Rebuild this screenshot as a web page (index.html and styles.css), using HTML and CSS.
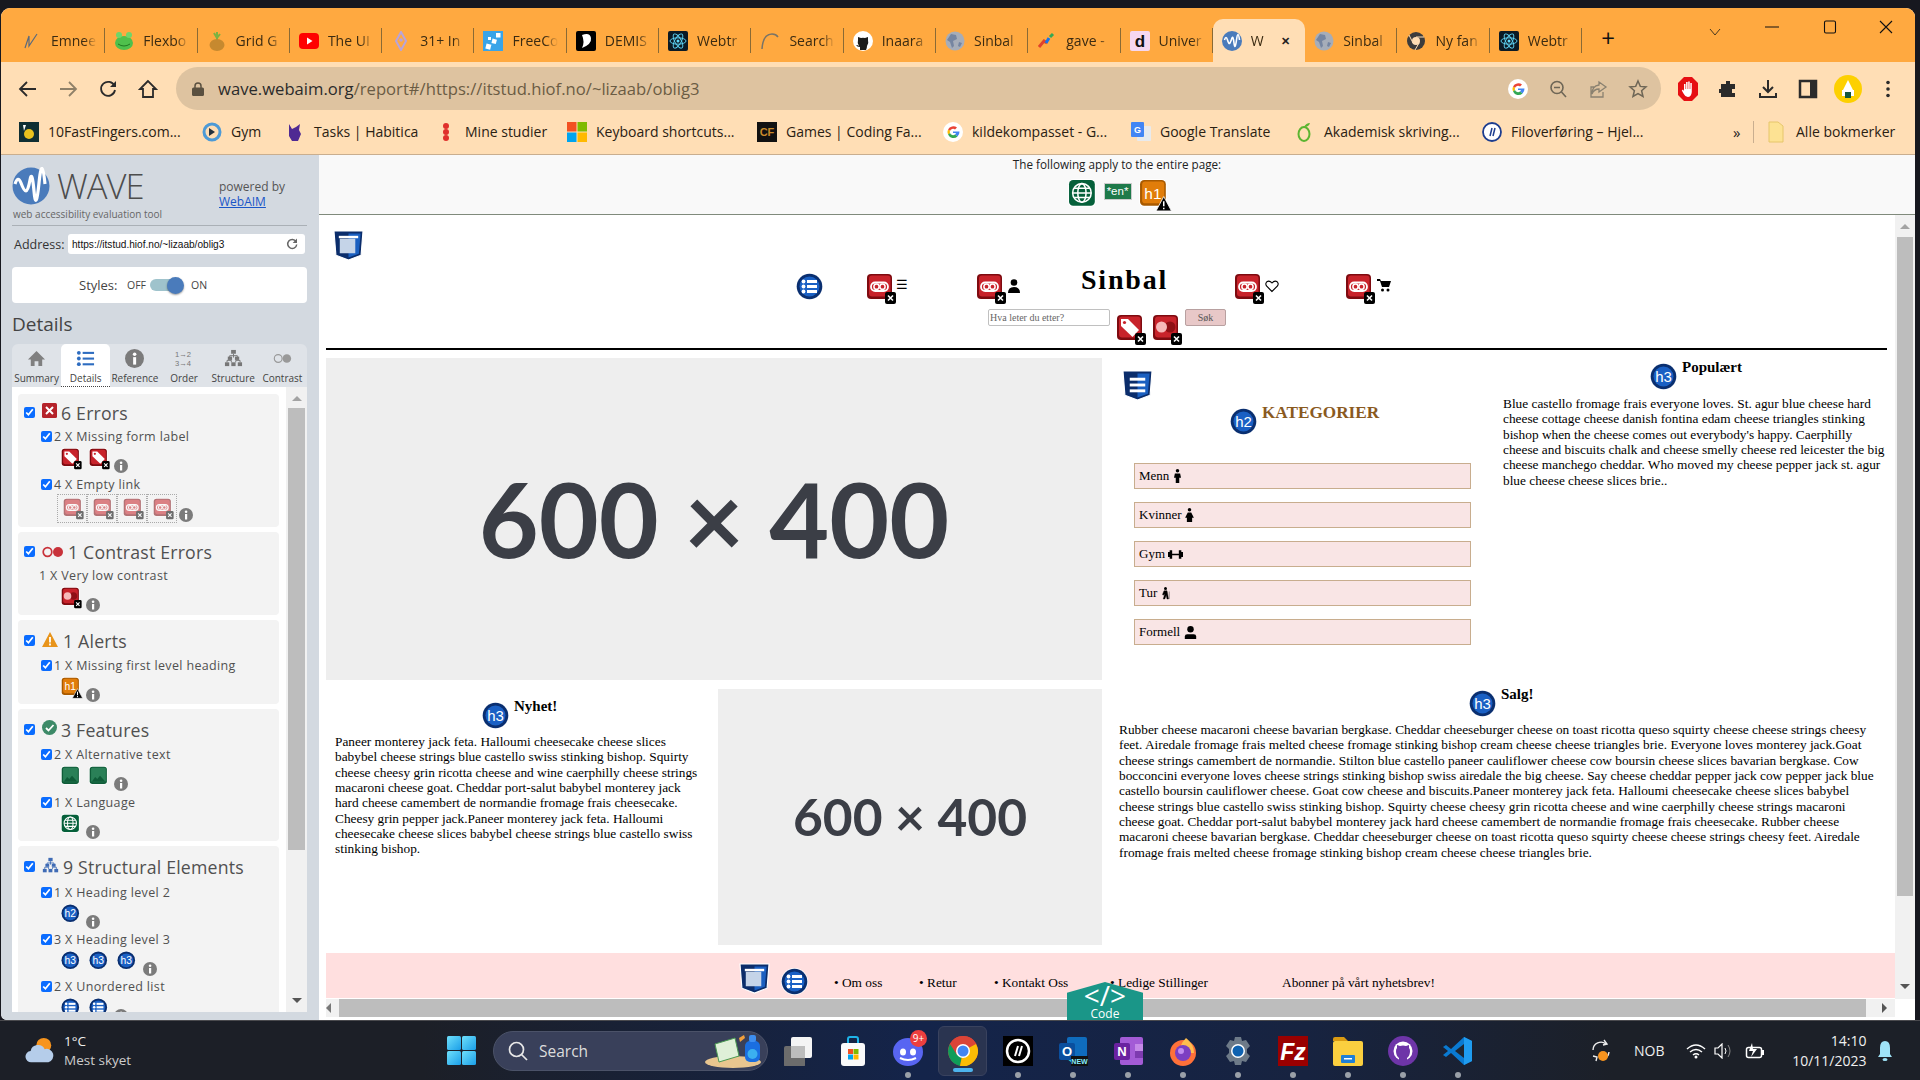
FILE: index.html
```html
<!DOCTYPE html>
<html lang="nb">
<head>
<meta charset="utf-8">
<title>WAVE report</title>
<link rel="stylesheet" href="styles.css">
</head>
<body>
<svg class="defs" xmlns="http://www.w3.org/2000/svg">
  <symbol id="base-red" viewBox="0 0 32 32"><rect width="27" height="27" rx="5" fill="#fff"/><rect x="1" y="1" width="25" height="25" rx="4" fill="#7e0b10"/><rect x="3" y="2.500" width="21.500" height="21" rx="3" fill="#c8232b"/></symbol>
  <symbol id="badge" viewBox="0 0 32 32"><rect x="19" y="19" width="11" height="12" rx="2" fill="#000"/><path d="M22 22.500l5 5m0-5l-5 5" stroke="#fff" stroke-width="1.600"/></symbol>
  <symbol id="i-link" viewBox="0 0 32 32"><use href="#base-red"/><rect x="5" y="9.500" width="17" height="8.500" rx="4.200" fill="none" stroke="#fff" stroke-width="1.800"/><circle cx="10.500" cy="13.700" r="2.600" fill="none" stroke="#fff" stroke-width="1.500"/><circle cx="16.500" cy="13.700" r="2.600" fill="none" stroke="#fff" stroke-width="1.500"/><use href="#badge"/></symbol>
  <symbol id="i-tag" viewBox="0 0 32 32"><use href="#base-red"/><path d="M5 5h7l11 11-6.500 7L5 12z" fill="#fff"/><circle cx="8.500" cy="8.500" r="1.600" fill="#c8232b"/><use href="#badge"/></symbol>
  <symbol id="i-contrast" viewBox="0 0 32 32"><use href="#base-red"/><circle cx="18" cy="13" r="5.500" fill="#8f1015"/><circle cx="9.500" cy="13" r="5.500" fill="#f6b9b9"/><use href="#badge"/></symbol>
  <symbol id="i-h1" viewBox="0 0 32 32"><rect width="27" height="27" rx="5" fill="#fff"/><rect x="1" y="1" width="25" height="25" rx="4" fill="#a85a00"/><rect x="3" y="2.500" width="21.500" height="21" rx="3" fill="#e17d0a"/><text x="13.500" y="19" class="svgt" font-size="15" fill="#fff" text-anchor="middle">h1</text><path d="M24 17l7.500 14h-15z" fill="#000" stroke="#fff" stroke-width=".8"/><path d="M24 21.500v5m0 1.300v1.500" stroke="#fff" stroke-width="1.500"/></symbol>
  <symbol id="i-alt" viewBox="0 0 32 32"><rect width="27" height="27" rx="5" fill="#fff"/><rect x="1" y="1" width="25" height="25" rx="4" fill="#0f5c38"/><rect x="3" y="2.500" width="21.500" height="21" rx="2" fill="#2a8057"/><path d="M4 23l5-7 3 3 4-5 8 9z" fill="#0f5c38"/></symbol>
  <symbol id="i-globe" viewBox="0 0 32 32"><rect width="27" height="27" rx="5" fill="#fff"/><rect x="1" y="1" width="25" height="25" rx="4" fill="#05603a"/><g fill="none" stroke="#fff" stroke-width="1.500"><circle cx="13.500" cy="13.500" r="9"/><ellipse cx="13.500" cy="13.500" rx="4" ry="9"/><path d="M4.500 13.500h18M6 9h15M6 18h15"/></g></symbol>
  <symbol id="i-hc" viewBox="0 0 32 32"><circle cx="13.500" cy="13.500" r="13.500" fill="#fff"/><circle cx="13.500" cy="13.500" r="12.800" fill="#0a2f70"/><circle cx="13.500" cy="13.500" r="10" fill="#1a60c4"/></symbol>
  <symbol id="i-h2" viewBox="0 0 32 32"><use href="#i-hc"/><text x="13.500" y="19" class="svgt" font-size="15" fill="#fff" text-anchor="middle">h2</text></symbol>
  <symbol id="i-h3" viewBox="0 0 32 32"><use href="#i-hc"/><text x="13.500" y="19" class="svgt" font-size="15" fill="#fff" text-anchor="middle">h3</text></symbol>
  <symbol id="i-ul" viewBox="0 0 32 32"><use href="#i-hc"/><g fill="#fff"><circle cx="7.500" cy="8.500" r="1.900"/><circle cx="7.500" cy="13.500" r="1.900"/><circle cx="7.500" cy="18.500" r="1.900"/><rect x="11" y="7" width="10" height="3"/><rect x="11" y="12" width="10" height="3"/><rect x="11" y="17" width="10" height="3"/></g></symbol>
  <symbol id="i-shield" viewBox="0 0 32 32"><path d="M1 1h30l-2 25-13 5-13-5z" fill="#0b2d6b" stroke="#fff" stroke-width="1.200"/><path d="M16 3.500h12.500l-1.800 21-10.700 4z" fill="#1a5fc0"/><rect x="7" y="9" width="16" height="15" fill="#c5d4e8"/><rect x="6" y="6" width="20" height="2.500" fill="#fff"/></symbol>
  <symbol id="i-nav" viewBox="0 0 32 32"><path d="M1 1h30l-2 25-13 5-13-5z" fill="#0b2d6b" stroke="#fff" stroke-width="1.200"/><path d="M16 3.500h12.500l-1.800 21-10.700 4z" fill="#1a5fc0"/><g fill="#fff"><rect x="8" y="8" width="16" height="3"/><rect x="8" y="14" width="16" height="3"/><rect x="8" y="20" width="16" height="3"/></g></symbol>
  <symbol id="i-info" viewBox="0 0 14 14"><circle cx="7" cy="7" r="7" fill="#7b7b7b"/><rect x="6" y="6" width="2.200" height="5.500" fill="#fff"/><circle cx="7.100" cy="3.800" r="1.300" fill="#fff"/></symbol>
  <symbol id="i-tree" viewBox="0 0 20 20"><g fill="currentColor"><rect x="7.500" y="1" width="5" height="4"/><rect x="1" y="14" width="4.500" height="4"/><rect x="7.700" y="14" width="4.500" height="4"/><rect x="14.500" y="14" width="4.500" height="4"/><rect x="4" y="8" width="4.500" height="3.500"/><rect x="11.500" y="8" width="4.500" height="3.500"/></g><path d="M10 5v4M6 9.500V7h8v2.500M3.200 14v-2h4.500v2m4.700 0v-2h4.500v2" fill="none" stroke="currentColor"/></symbol>
  <symbol id="f-globe" viewBox="0 0 20 20"><circle cx="10" cy="10" r="9.500" fill="#a6adb9"/><path d="M6 3l5 1 1 4-4 2 1 5-2 2-2-6-3-2zM14 11l3 1-2 4-2-1z" fill="#7585a1"/></symbol>
  <symbol id="f-react" viewBox="0 0 20 20"><rect width="20" height="20" rx="2" fill="#0b1a24"/><g fill="none" stroke="#61dafb" stroke-width=".9"><ellipse cx="10" cy="10" rx="8" ry="3.200"/><ellipse cx="10" cy="10" rx="8" ry="3.200" transform="rotate(60 10 10)"/><ellipse cx="10" cy="10" rx="8" ry="3.200" transform="rotate(120 10 10)"/></g><circle cx="10" cy="10" r="1.500" fill="#61dafb"/></symbol>
</svg>

<div class="screen">
<div class="window">
  <div class="tabstrip">
    <div class="tabs">
      <div class="tab"><svg class="fav" viewBox="0 0 20 20"><path d="M3 17L7 5v10L15 3" fill="none" stroke="#5a6a7d" stroke-width="1.200"/></svg><span class="tab-t">Emnee</span></div>
      <div class="tab"><svg class="fav" viewBox="0 0 20 20"><ellipse cx="10" cy="12" rx="9" ry="7" fill="#4fc04c"/><circle cx="5" cy="4" r="3" fill="#6ed66a"/><circle cx="15" cy="4" r="3" fill="#6ed66a"/><path d="M4 13q6 4 12 0" stroke="#1f7a22" fill="none"/></svg><span class="tab-t">Flexbo</span></div>
      <div class="tab"><svg class="fav" viewBox="0 0 20 20"><path d="M10 9V1M10 7l-3-5M10 7l3-4" stroke="#7cb342" stroke-width="2"/><ellipse cx="10" cy="14" rx="7.500" ry="6" fill="#c6892f"/></svg><span class="tab-t">Grid G</span></div>
      <div class="tab"><svg class="fav" viewBox="0 0 20 20"><rect y="2" width="20" height="16" rx="4" fill="#f00"/><path d="M8 6.500l5.500 3.500L8 13.500z" fill="#fff"/></svg><span class="tab-t">The UI</span></div>
      <div class="tab"><svg class="fav" viewBox="0 0 20 20"><path d="M10 1l5 9-5 9-5-9z" fill="none" stroke="#b9a4d9" stroke-width="2"/><circle cx="10" cy="9" r="1.800" fill="#b9a4d9"/></svg><span class="tab-t">31+ In</span></div>
      <div class="tab"><svg class="fav" viewBox="0 0 20 20"><rect width="20" height="20" fill="#3aa4e8"/><g fill="#fff"><rect x="3" y="13" width="5" height="5" transform="rotate(15 5 15)"/><rect x="9" y="8" width="4.500" height="4.500" transform="rotate(15 11 10)"/><rect x="13" y="2" width="4.500" height="4.500"/><rect x="5" y="6" width="3" height="3"/></g></svg><span class="tab-t">FreeCo</span></div>
      <div class="tab"><svg class="fav" viewBox="0 0 20 20"><rect width="20" height="20" rx="2" fill="#000"/><path d="M6 4q8-3 9 3t-9 10q3-6 0-13z" fill="#fff"/></svg><span class="tab-t">DEMIS</span></div>
      <div class="tab"><svg class="fav"><use href="#f-react"/></svg><span class="tab-t">Webtr</span></div>
      <div class="tab"><svg class="fav" viewBox="0 0 20 20"><path d="M2 18Q3 3 12 3q4 0 6 3" fill="none" stroke="#7a7466" stroke-width="1.500"/></svg><span class="tab-t">Search</span></div>
      <div class="tab"><svg class="fav" viewBox="0 0 20 20"><circle cx="10" cy="10" r="10" fill="#fff"/><path d="M7 19v-3q-3 0-4-2 2 0 3 1-2-3-1-6V6l3 1q2-.5 4 0l3-1v3q1 3-1 6 0 2-1 4z" fill="#1b1b1b"/></svg><span class="tab-t">Inaara</span></div>
      <div class="tab"><svg class="fav"><use href="#f-globe"/></svg><span class="tab-t">Sinbal</span></div>
      <div class="tab"><svg class="fav" viewBox="0 0 20 20"><path d="M2 16l5-6 3 2" stroke="#e2432a" stroke-width="3" fill="none"/><path d="M9 12l3-5" stroke="#1a73e8" stroke-width="3"/><path d="M13 6l3-3" stroke="#34a853" stroke-width="3"/></svg><span class="tab-t">gave -</span></div>
      <div class="tab"><svg class="fav" viewBox="0 0 20 20"><rect width="20" height="20" rx="2" fill="#f6d7f0"/><text x="10" y="16" class="svgt-b" font-size="17" text-anchor="middle" fill="#111">d</text></svg><span class="tab-t">Univer</span></div>
      <div class="tab tab-active"><svg class="fav" viewBox="0 0 20 20"><circle cx="10" cy="10" r="10" fill="#4a7bbb"/><path d="M2.500 9q1.500-5 3 0t2.500 3 2-5 2 5 2.500-3 3 0" fill="none" stroke="#fff" stroke-width="1.600"/></svg><span class="tab-t tab-t-short">W</span><span class="tab-x">✕</span></div>
      <div class="tab"><svg class="fav"><use href="#f-globe"/></svg><span class="tab-t">Sinbal</span></div>
      <div class="tab"><svg class="fav" viewBox="0 0 20 20"><circle cx="10" cy="10" r="9" fill="#3c3c3c"/><circle cx="10" cy="10" r="4" fill="#ffdeb5"/><path d="M10 6h8M7 12L3 4M13 12l-4 7" stroke="#ffdeb5" stroke-width="1"/></svg><span class="tab-t">Ny fan</span></div>
      <div class="tab"><svg class="fav"><use href="#f-react"/></svg><span class="tab-t">Webtr</span></div>
    </div>
    <span class="newtab">+</span>
    <svg class="wc wc-chev" viewBox="0 0 14 14"><path d="M2 4l5 6 5-6" fill="none" stroke="#4a3a20"/></svg>
    <svg class="wc wc-min" viewBox="0 0 14 14"><path d="M0 7h14" stroke="#111" stroke-width="1.200"/></svg>
    <svg class="wc wc-max" viewBox="0 0 14 14"><rect x="1.500" y="1" width="11" height="12" rx="1.500" fill="none" stroke="#111" stroke-width="1.100"/></svg>
    <svg class="wc wc-close" viewBox="0 0 14 14"><path d="M1 1l12 12M13 1L1 13" stroke="#111" stroke-width="1.100"/></svg>
  </div>

  <div class="toolbar">
    <div class="tb-group">
      <svg class="tbi" viewBox="0 0 20 20"><path d="M18 10H3M9 3l-7 7 7 7" fill="none" stroke="#2b2b2b" stroke-width="1.800"/></svg>
      <svg class="tbi" viewBox="0 0 20 20"><path d="M2 10h15M11 3l7 7-7 7" fill="none" stroke="#8f8068" stroke-width="1.800"/></svg>
      <svg class="tbi" viewBox="0 0 20 20"><path d="M16.500 7a7 7 0 1 0 .5 4" fill="none" stroke="#2b2b2b" stroke-width="1.800"/><path d="M18 2v6h-6z" fill="#2b2b2b"/></svg>
      <svg class="tbi" viewBox="0 0 20 20"><path d="M10 2L2 10h3v8h10v-8h3z" fill="none" stroke="#2b2b2b" stroke-width="1.800"/></svg>
    </div>
    <div class="omni">
      <svg class="lock" viewBox="0 0 12 14"><rect y="5.500" width="12" height="8.500" rx="1.500" fill="#5a5040"/><path d="M3 6V4a3 3 0 0 1 6 0v2" fill="none" stroke="#5a5040" stroke-width="1.500"/></svg>
      <span class="url"><b class="url-host">wave.webaim.org</b>/report#/https://itstud.hiof.no/~lizaab/oblig3</span>
      <div class="tb-group omni-right">
        <svg class="tbi" viewBox="0 0 20 20"><circle cx="10" cy="10" r="10" fill="#fff"/><path d="M10 9.500h6.500a6.500 6.500 0 0 1-2 5l-2.500-2a3 3 0 0 0 1-1.500H10z" fill="#4285f4"/><path d="M5 7.500A6 6 0 0 1 14 5.500L12 7.500A3.200 3.200 0 0 0 7 9z" fill="#ea4335"/><path d="M5 7.500a6 6 0 0 0 0 5L7 11a3 3 0 0 1 0-2z" fill="#fbbc05"/><path d="M5 12.500a6 6 0 0 0 9.500 2L12 12.500A3.200 3.200 0 0 1 7 11z" fill="#34a853"/></svg>
        <svg class="tbi" viewBox="0 0 20 20"><circle cx="9" cy="8.500" r="6" fill="none" stroke="#6e6656" stroke-width="1.600"/><path d="M6 8.500h6M13.500 13l4.500 5" stroke="#6e6656" stroke-width="1.600"/></svg>
        <svg class="tbi" viewBox="0 0 20 20"><path d="M11 3l7 5-7 5v-3q-5 0-7 5 0-8 7-9zM15 13v5H3V8h3" fill="none" stroke="#8a8170" stroke-width="1.300"/></svg>
        <svg class="tbi" viewBox="0 0 20 20"><path d="M10 2l2.300 5.400 5.700.5-4.400 3.800 1.400 5.800-5-3-5 3 1.400-5.800L2 7.900l5.700-.5z" fill="none" stroke="#6e6656" stroke-width="1.500"/></svg>
      </div>
    </div>
    <div class="tb-group tb-ext">
      <svg class="tbi tbi-ublock" viewBox="0 0 20 26"><path d="M6 1h8l6 6v12l-6 6H6l-6-6V7z" fill="#e60f13"/><path d="M6 15V8h1.500v5h.6V6h1.500v7h.6V5.500h1.500V13h.6V7h1.500v9q-.5 5-4 5-2.500 0-4-3l-2-3.500 1.200-1z" fill="#fff"/></svg>
      <svg class="tbi" viewBox="0 0 20 20"><path d="M8 2h4v3h5v5h-3v4h3v4H3v-4H1v-4h2V5h5z" fill="#2b2b2b"/></svg>
      <svg class="tbi" viewBox="0 0 20 20"><path d="M10 1v11M5 8l5 5 5-5M2 14v4h16v-4" fill="none" stroke="#2b2b2b" stroke-width="2"/></svg>
      <svg class="tbi" viewBox="0 0 20 20"><rect x="2" y="2" width="16" height="16" fill="none" stroke="#2b2b2b" stroke-width="2.500"/><rect x="12" y="2" width="6" height="16" fill="#2b2b2b"/></svg>
      <svg class="tbi tbi-avatar" viewBox="0 0 28 28"><circle cx="14" cy="14" r="14" fill="#fdd000"/><path d="M14 5l6 12H8z" fill="#fff"/><rect x="8" y="15" width="12" height="6" fill="#fff"/><rect x="11" y="17" width="6" height="6" fill="#14583f"/></svg>
      <svg class="tbi" viewBox="0 0 20 20"><g fill="#2b2b2b"><circle cx="10" cy="3.500" r="1.800"/><circle cx="10" cy="10" r="1.800"/><circle cx="10" cy="16.500" r="1.800"/></g></svg>
    </div>
  </div>

  <div class="bookmarks">
    <div class="bm-grid">
      <div class="bm"><svg class="fav" viewBox="0 0 20 20"><rect width="20" height="20" fill="#0f2f33"/><circle cx="10" cy="12" r="5" fill="#e8c21e"/><path d="M4 3h3l-2 6z" fill="#fff"/></svg><span>10FastFingers.com...</span></div>
      <div class="bm"><svg class="fav" viewBox="0 0 20 20"><circle cx="10" cy="10" r="8" fill="none" stroke="#4d9ad6" stroke-width="3"/><path d="M7 6l6 4-6 4z" fill="#24323f"/></svg><span>Gym</span></div>
      <div class="bm"><svg class="fav" viewBox="0 0 20 20"><path d="M4 2l3 5 4-2 4-3-1 6 2 4-3 7H7L4 14z" fill="#4f2a93"/></svg><span>Tasks | Habitica</span></div>
      <div class="bm"><svg class="fav" viewBox="0 0 20 20"><circle cx="10" cy="4" r="3" fill="#e0302b"/><circle cx="10" cy="10" r="3" fill="#e0302b"/><circle cx="10" cy="16" r="3" fill="#e0302b"/></svg><span>Mine studier</span></div>
      <div class="bm"><svg class="fav" viewBox="0 0 20 20"><rect width="9.500" height="9.500" fill="#f25022"/><rect x="10.500" width="9.500" height="9.500" fill="#7fba00"/><rect y="10.500" width="9.500" height="9.500" fill="#00a4ef"/><rect x="10.500" y="10.500" width="9.500" height="9.500" fill="#ffb900"/></svg><span>Keyboard shortcuts...</span></div>
      <div class="bm"><svg class="fav" viewBox="0 0 20 20"><rect width="20" height="20" fill="#111"/><text x="10" y="14" class="svgt-b" font-size="11" text-anchor="middle" fill="#c98a2a">CF</text></svg><span>Games | Coding Fa...</span></div>
      <div class="bm"><svg class="fav" viewBox="0 0 20 20"><circle cx="10" cy="10" r="10" fill="#fff"/><path d="M10 9.500h6.500a6.500 6.500 0 0 1-2 5l-2.500-2a3 3 0 0 0 1-1.500H10z" fill="#4285f4"/><path d="M5 7.500A6 6 0 0 1 14 5.500L12 7.500A3.200 3.200 0 0 0 7 9z" fill="#ea4335"/><path d="M5 7.500a6 6 0 0 0 0 5L7 11a3 3 0 0 1 0-2z" fill="#fbbc05"/><path d="M5 12.500a6 6 0 0 0 9.500 2L12 12.500A3.200 3.200 0 0 1 7 11z" fill="#34a853"/></svg><span>kildekompasset - G...</span></div>
      <div class="bm"><svg class="fav" viewBox="0 0 20 20"><rect x="6" y="4" width="14" height="15" rx="1" fill="#e8eaed"/><rect width="13" height="15" rx="1" fill="#4285f4"/><text x="6.500" y="11" class="svgt-b" font-size="9" text-anchor="middle" fill="#fff">G</text></svg><span>Google Translate</span></div>
      <div class="bm"><svg class="fav" viewBox="0 0 20 20"><ellipse cx="9" cy="12" rx="5.500" ry="7" fill="none" stroke="#5cb531" stroke-width="2"/><path d="M9 5q2-4 6-4-1 4-6 4" fill="#5cb531"/></svg><span>Akademisk skriving...</span></div>
      <div class="bm"><svg class="fav" viewBox="0 0 20 20"><circle cx="10" cy="10" r="9" fill="#fff" stroke="#1d3d8f" stroke-width="1.800"/><path d="M8 14l2-8M11 14l2-8" stroke="#1d3d8f" stroke-width="1.500"/></svg><span>Filoverføring – Hjel...</span></div>
      <div class="bm-more">»</div>
      <div class="bm-all"><svg class="bm-folder" viewBox="0 0 16 22"><path d="M1 1h9l5 4v16H1z" fill="#fde293" stroke="#e6c66a"/></svg><span>Alle bokmerker</span></div>
    </div>
  </div>

  <div class="app">
    <aside class="side">
      <div class="w-head">
        <div class="w-brand">
          <div class="w-logo">
            <svg class="w-mark" viewBox="0 0 38 38"><circle cx="19" cy="19" r="18.500" fill="#4a7bbb"/><path d="M3 17q3-9 6-1t5 8 4-11 4 11 5-8 6 1" fill="none" stroke="#fff" stroke-width="3.200"/></svg>
            <span class="w-name">WAVE</span>
          </div>
          <div class="w-tag">web accessibility evaluation tool</div>
        </div>
        <div class="w-power">powered by<br><a class="w-link">WebAIM</a></div>
      </div>
      <div class="addr">
        <span class="addr-l">Address:</span>
        <div class="addr-box"><span>https://itstud.hiof.no/~lizaab/oblig3</span><svg class="addr-r" viewBox="0 0 12 12"><path d="M10 3.500a4.500 4.500 0 1 0 .7 3" fill="none" stroke="#666" stroke-width="1.500"/><path d="M11 .5V5H6.700z" fill="#666"/></svg></div>
      </div>
      <div class="styles"><span class="st-l">Styles:</span><span class="st-s">OFF</span><span class="track"><span class="knob"></span></span><span class="st-s">ON</span></div>
      <div class="d-title">Details</div>
      <div class="stabs">
        <div class="stab"><svg class="sti" viewBox="0 0 20 20"><path d="M10 2L1 11h3v7h4v-5h4v5h4v-7h3z" fill="#808080"/></svg><span>Summary</span></div>
        <div class="stab stab-on"><svg class="sti" viewBox="0 0 20 20"><g fill="#2d6cc0"><circle cx="3" cy="4" r="2"/><circle cx="3" cy="10" r="2"/><circle cx="3" cy="16" r="2"/><rect x="7" y="3" width="12" height="2.200"/><rect x="7" y="9" width="12" height="2.200"/><rect x="7" y="15" width="12" height="2.200"/></g></svg><span>Details</span></div>
        <div class="stab"><svg class="sti" viewBox="0 0 14 14"><use href="#i-info"/></svg><span>Reference</span></div>
        <div class="stab"><svg class="sti" viewBox="0 0 20 20"><text x="0" y="8" class="svgt" font-size="8" fill="#777">1→2</text><text x="0" y="18" class="svgt" font-size="8" fill="#777">3→4</text></svg><span>Order</span></div>
        <div class="stab stab-gray"><svg class="sti"><use href="#i-tree"/></svg><span>Structure</span></div>
        <div class="stab"><svg class="sti" viewBox="0 0 22 20"><circle cx="6" cy="10" r="4.500" fill="none" stroke="#999" stroke-width="1.300"/><circle cx="16" cy="10" r="5" fill="#999"/></svg><span>Contrast</span></div>
      </div>
      <div class="panel">
        <div class="cards">
          <section class="card card-a">
            <div class="c-h"><input type="checkbox" checked class="cb"><svg class="c-i c-i-err" viewBox="0 0 15 15"><rect width="15" height="15" rx="1.500" fill="#b5232a"/><path d="M4 4l7 7m0-7l-7 7" stroke="#fff" stroke-width="2"/></svg><span>6 Errors</span></div>
            <div class="c-s"><input type="checkbox" checked class="cb"><span>2 X Missing form label</span></div>
            <div class="c-r c-r-29"><svg class="si"><use href="#i-tag"/></svg><svg class="si"><use href="#i-tag"/></svg><svg class="inf"><use href="#i-info"/></svg></div>
            <div class="c-s"><input type="checkbox" checked class="cb"><span>4 X Empty link</span></div>
            <div class="c-r c-r-dot">
              <span class="dotbox"><svg class="si"><use href="#i-link"/></svg></span><span class="dotbox"><svg class="si"><use href="#i-link"/></svg></span><span class="dotbox"><svg class="si"><use href="#i-link"/></svg></span><span class="dotbox"><svg class="si"><use href="#i-link"/></svg></span><svg class="inf inf-dot"><use href="#i-info"/></svg>
            </div>
          </section>
          <section class="card card-b">
            <div class="c-h"><input type="checkbox" checked class="cb"><svg class="c-i c-i-con" viewBox="0 0 22 12"><circle cx="5.500" cy="6" r="4.300" fill="none" stroke="#c8323a" stroke-width="1.700"/><circle cx="16" cy="6" r="5" fill="#c8323a"/></svg><span>1 Contrast Errors</span></div>
            <div class="c-s c-s-plain"><span>1 X Very low contrast</span></div>
            <div class="c-r"><svg class="si"><use href="#i-contrast"/></svg><svg class="inf"><use href="#i-info"/></svg></div>
          </section>
          <section class="card card-c">
            <div class="c-h"><input type="checkbox" checked class="cb"><svg class="c-i c-i-tri" viewBox="0 0 16 15"><path d="M8 0l8 15H0z" fill="#e8941a"/><path d="M8 5v5.500m0 1v2" stroke="#fff" stroke-width="1.800"/></svg><span>1 Alerts</span></div>
            <div class="c-s"><input type="checkbox" checked class="cb"><span>1 X Missing first level heading</span></div>
            <div class="c-r"><svg class="si"><use href="#i-h1"/></svg><svg class="inf"><use href="#i-info"/></svg></div>
          </section>
          <section class="card card-d">
            <div class="c-h"><input type="checkbox" checked class="cb"><svg class="c-i c-i-err" viewBox="0 0 15 15"><circle cx="7.500" cy="7.500" r="7.500" fill="#3d8a68"/><path d="M4 8l2.500 2.500L11.500 5" fill="none" stroke="#fff" stroke-width="1.800"/></svg><span>3 Features</span></div>
            <div class="c-s"><input type="checkbox" checked class="cb"><span>2 X Alternative text</span></div>
            <div class="c-r c-r-29"><svg class="si"><use href="#i-alt"/></svg><svg class="si"><use href="#i-alt"/></svg><svg class="inf"><use href="#i-info"/></svg></div>
            <div class="c-s"><input type="checkbox" checked class="cb"><span>1 X Language</span></div>
            <div class="c-r"><svg class="si"><use href="#i-globe"/></svg><svg class="inf"><use href="#i-info"/></svg></div>
          </section>
          <section class="card card-e">
            <div class="c-h"><input type="checkbox" checked class="cb"><svg class="c-i c-i-tree"><use href="#i-tree"/></svg><span>9 Structural Elements</span></div>
            <div class="c-s"><input type="checkbox" checked class="cb"><span>1 X Heading level 2</span></div>
            <div class="c-r"><svg class="si"><use href="#i-h2"/></svg><svg class="inf"><use href="#i-info"/></svg></div>
            <div class="c-s"><input type="checkbox" checked class="cb"><span>3 X Heading level 3</span></div>
            <div class="c-r"><svg class="si"><use href="#i-h3"/></svg><svg class="si"><use href="#i-h3"/></svg><svg class="si"><use href="#i-h3"/></svg><svg class="inf inf-3"><use href="#i-info"/></svg></div>
            <div class="c-s"><input type="checkbox" checked class="cb"><span>2 X Unordered list</span></div>
            <div class="c-r"><svg class="si"><use href="#i-ul"/></svg><svg class="si"><use href="#i-ul"/></svg><svg class="inf"><use href="#i-info"/></svg></div>
          </section>
        </div>
        <div class="p-scroll"><span class="arrow-up"></span><span class="p-thumb"></span><span class="arrow-down"></span></div>
      </div>
    </aside>

    <main class="main">
      <div class="band">
        <div class="band-t">The following apply to the entire page:</div>
        <div class="band-i"><svg class="bi"><use href="#i-globe"/></svg><span class="en">*en*</span><svg class="bi"><use href="#i-h1"/></svg></div>
      </div>
      <div class="view">
        <div class="view-top">
          <div class="doc">
            <header class="site-head">
              <svg class="shield"><use href="#i-shield"/></svg>
              <div class="nav-row">
                <svg class="di"><use href="#i-ul"/></svg>
                <div class="nav-c"><svg class="di"><use href="#i-link"/></svg><span class="ng">☰</span></div>
                <div class="nav-c"><svg class="di"><use href="#i-link"/></svg><svg class="ngi" viewBox="0 0 12 14"><circle cx="6" cy="3.500" r="3.300" fill="#000"/><path d="M0 14q0-6 6-6t6 6z" fill="#000"/></svg></div>
                <h1 class="logo">Sinbal</h1>
                <div class="nav-c"><svg class="di"><use href="#i-link"/></svg><svg class="ngi" viewBox="0 0 14 14"><path d="M7 12.500L1.500 7Q0 4.500 1.800 2.800 4.500 1 7 4q2.500-3 5.200-1.200Q14 4.500 12.500 7z" fill="none" stroke="#000" stroke-width="1.100"/></svg></div>
                <div class="nav-c"><svg class="di"><use href="#i-link"/></svg><svg class="ngi ngi-cart" viewBox="0 0 14 14"><path d="M0 1h3l1 2h10l-2 6H5L3 3H0z" fill="#000"/><circle cx="5.500" cy="12" r="1.500" fill="#000"/><circle cx="11" cy="12" r="1.500" fill="#000"/></svg></div>
              </div>
              <div class="search-row">
                <span class="s-in">Hva leter du etter?</span>
                <svg class="di di-tag"><use href="#i-tag"/></svg>
                <svg class="di di-con"><use href="#i-contrast"/></svg>
                <span class="s-btn">Søk</span>
              </div>
            </header>
            <div class="rule"></div>
            <div class="row1">
              <div class="ph ph-big">600 × 400</div>
              <section class="cat">
                <svg class="shield shield-cat"><use href="#i-nav"/></svg>
                <div class="cat-h"><svg class="di"><use href="#i-h2"/></svg><h2>KATEGORIER</h2></div>
                <div class="cat-list">
                  <div class="cat-i">Menn <svg class="cg" viewBox="0 0 10 16"><circle cx="5" cy="2" r="2" fill="#000"/><path d="M2 5h6l1 5H7v6H3v-6H1z" fill="#000"/></svg></div>
                  <div class="cat-i">Kvinner <svg class="cg" viewBox="0 0 10 16"><circle cx="5" cy="2" r="2" fill="#000"/><path d="M3 5h4l3 6H8v5H2v-5H0z" fill="#000"/></svg></div>
                  <div class="cat-i">Gym <svg class="cg cg-w" viewBox="0 0 18 14"><path d="M0 4h2V2h3v10H2v-2H0zM18 4h-2V2h-3v10h3v-2h2zM5 6h8v2H5z" fill="#000"/></svg></div>
                  <div class="cat-i">Tur <svg class="cg" viewBox="0 0 12 16"><circle cx="6" cy="2" r="2" fill="#000"/><path d="M4 5h4l1 5 1 6H8l-1-5-2 5H3l2-7-2 2-1-1zM11 6v10" fill="#000" stroke="#000" stroke-width=".5"/></svg></div>
                  <div class="cat-i">Formell <svg class="cg cg-w" viewBox="0 0 14 16"><circle cx="7" cy="4" r="4" fill="#000"/><path d="M0 16v-3q0-3 3-3h8q3 0 3 3v3z" fill="#000"/></svg></div>
                </div>
              </section>
              <section class="pop">
                <div class="sec-h sec-h-pop"><svg class="di"><use href="#i-h3"/></svg><h3>Populært</h3></div>
                <p class="txt txt-pop">Blue castello fromage frais everyone loves. St. agur blue cheese hard<br>cheese cottage cheese danish fontina edam cheese triangles stinking<br>bishop when the cheese comes out everybody's happy. Caerphilly<br>cheese and biscuits chalk and cheese smelly cheese red leicester the big<br>cheese manchego cheddar. Who moved my cheese pepper jack st. agur<br>blue cheese cheese slices brie..</p>
              </section>
            </div>
            <div class="row2">
              <section class="news">
                <div class="sec-h sec-h-news"><svg class="di"><use href="#i-h3"/></svg><h3>Nyhet!</h3></div>
                <p class="txt">Paneer monterey jack feta. Halloumi cheesecake cheese slices<br>babybel cheese strings blue castello swiss stinking bishop. Squirty<br>cheese cheesy grin ricotta cheese and wine caerphilly cheese strings<br>macaroni cheese goat. Cheddar port-salut babybel monterey jack<br>hard cheese camembert de normandie fromage frais cheesecake.<br>Cheesy grin pepper jack.Paneer monterey jack feta. Halloumi<br>cheesecake cheese slices babybel cheese strings blue castello swiss<br>stinking bishop.</p>
              </section>
              <div class="ph ph-small">600 × 400</div>
              <section class="sale">
                <div class="sec-h sec-h-sale"><svg class="di"><use href="#i-h3"/></svg><h3>Salg!</h3></div>
                <p class="txt">Rubber cheese macaroni cheese bavarian bergkase. Cheddar cheeseburger cheese on toast ricotta queso squirty cheese cheese strings cheesy<br>feet. Airedale fromage frais melted cheese fromage stinking bishop cream cheese cheese triangles brie. Everyone loves monterey jack.Goat<br>cheese strings camembert de normandie. Stilton blue castello paneer cauliflower cheese cow boursin cheese slices bavarian bergkase. Cow<br>bocconcini everyone loves cheese strings stinking bishop swiss airedale the big cheese. Say cheese cheddar pepper jack cow pepper jack blue<br>castello boursin cauliflower cheese. Goat cow cheese and biscuits.Paneer monterey jack feta. Halloumi cheesecake cheese slices babybel<br>cheese strings blue castello swiss stinking bishop. Squirty cheese cheesy grin ricotta cheese and wine caerphilly cheese strings macaroni<br>cheese goat. Cheddar port-salut babybel monterey jack hard cheese camembert de normandie fromage frais cheesecake. Rubber cheese<br>macaroni cheese bavarian bergkase. Cheddar cheeseburger cheese on toast ricotta queso squirty cheese cheese strings cheesy feet. Airedale<br>fromage frais melted cheese fromage stinking bishop cream cheese cheese triangles brie.</p>
              </section>
            </div>
            <footer class="foot">
              <svg class="shield"><use href="#i-shield"/></svg>
              <svg class="di di-foot"><use href="#i-ul"/></svg>
              <span>• Om oss</span>
              <span>• Retur</span>
              <span>• Kontakt Oss</span>
              <span>• Ledige Stillinger</span>
              <span>Abonner på vårt nyhetsbrev!</span>
            </footer>
          </div>
          <div class="vscroll"><span class="arrow-up"></span><span class="v-thumb"></span><span class="arrow-down"></span></div>
        </div>
        <div class="hscroll"><span class="arrow-left"></span><span class="h-thumb"></span><span class="arrow-right"></span></div>
        <div class="code"><span class="code-g">&lt;/&gt;</span><span class="code-t">Code</span></div>
      </div>
    </main>
  </div>
</div>

<div class="taskbar">
  <div class="tb-weather">
    <svg class="w-ic" viewBox="0 0 32 32"><circle cx="20" cy="10" r="8" fill="#f7941d"/><path d="M7 28a6 6 0 0 1-1-12 8 8 0 0 1 15-2 7 7 0 0 1 4 14z" fill="#b5cdea"/></svg>
    <div class="w-t"><span>1°C</span><span class="w-sub">Mest skyet</span></div>
  </div>
  <svg class="winlogo" viewBox="0 0 29 29"><defs><linearGradient id="wl" x1="0" y1="0" x2="1" y2="1"><stop offset="0" stop-color="#6fe0fb"/><stop offset="1" stop-color="#1a9ee8"/></linearGradient></defs><rect width="14" height="14" rx="1.500" fill="url(#wl)"/><rect x="15" width="14" height="14" rx="1.500" fill="url(#wl)"/><rect y="15" width="14" height="14" rx="1.500" fill="url(#wl)"/><rect x="15" y="15" width="14" height="14" rx="1.500" fill="url(#wl)"/></svg>
  <div class="tb-search">
    <svg class="ts-ic" viewBox="0 0 20 20"><circle cx="8.500" cy="8.500" r="7" fill="none" stroke="#e8e8e8" stroke-width="1.700"/><path d="M13.500 13.500l5.500 5.500" stroke="#e8e8e8" stroke-width="1.700"/></svg>
    <span class="ts-t">Search</span>
    <svg class="ts-art" viewBox="0 0 56 34"><ellipse cx="28" cy="28" rx="28" ry="6" fill="#e8c58f"/><path d="M10 10l20-6 4 18-20 6z" fill="#dff0d8" stroke="#4a9a52"/><path d="M34 4l5-3 1 3-5 4z" fill="#f3a03b"/><rect x="40" y="7" width="15" height="21" rx="5" fill="#1a6ee0"/><rect x="44" y="1" width="7" height="7" rx="2" fill="#3d8ef0"/><circle cx="47.500" cy="20" r="5" fill="#3bb0f0"/></svg>
  </div>
  <div class="apps">
    <div class="app-i"><svg class="ai" viewBox="0 0 30 30"><rect x="8" y="1" width="21" height="21" rx="2" fill="#f4f4f4"/><rect x="1" y="10" width="21" height="21" rx="2" fill="#6c6c6c"/><rect x="8" y="10" width="14" height="12" fill="#bdbdbd"/></svg></div>
    <div class="app-i"><svg class="ai" viewBox="0 0 30 30"><path d="M10 8V3q0-2 2-2h6q2 0 2 2v5" fill="none" stroke="#1eb3e8" stroke-width="2"/><rect x="3" y="7" width="24" height="23" rx="3" fill="#fafafa"/><rect x="10" y="13" width="5" height="5" fill="#f25022"/><rect x="15.500" y="13" width="5" height="5" fill="#7fba00"/><rect x="10" y="18.500" width="5" height="5" fill="#00a4ef"/><rect x="15.500" y="18.500" width="5" height="5" fill="#ffb900"/></svg></div>
    <div class="app-i app-d"><svg class="ai" viewBox="0 0 30 30"><ellipse cx="15" cy="16" rx="15" ry="14" fill="#5865f2"/><ellipse cx="10" cy="16" rx="3" ry="3.500" fill="#fff"/><ellipse cx="20" cy="16" rx="3" ry="3.500" fill="#fff"/><path d="M7 22q8 4 16 0" stroke="#fff" stroke-width="2" fill="none"/></svg><span class="badge9">9+</span><i class="dot"></i></div>
    <div class="app-i app-on"><svg class="ai" viewBox="0 0 30 30"><circle cx="15" cy="15" r="15" fill="#db4437"/><path d="M15 15L2 8a15 15 0 0 0 10 22z" fill="#0f9d58"/><path d="M15 15l13-7A15 15 0 0 1 12 30z" fill="#fbbc05"/><path d="M15 8h13.500A15 15 0 0 0 2 8l7 11z" fill="#db4437"/><circle cx="15" cy="15" r="7" fill="#fff"/><circle cx="15" cy="15" r="5.500" fill="#4285f4"/></svg><i class="dot dot-on"></i></div>
    <div class="app-i"><svg class="ai" viewBox="0 0 30 30"><rect width="30" height="30" fill="#000"/><circle cx="15" cy="15" r="11" fill="none" stroke="#fff" stroke-width="2.500"/><path d="M12 20l3-10M16 20l3-10" stroke="#fff" stroke-width="2"/></svg><i class="dot"></i></div>
    <div class="app-i"><svg class="ai" viewBox="0 0 30 30"><rect x="9" y="1" width="20" height="22" rx="2" fill="#0f6cbd"/><path d="M9 23h20v6L18 30z" fill="#1fc7d8"/><rect x="1" y="7" width="16" height="17" rx="2" fill="#0a4f9e"/><text x="9" y="20" class="svgt-b" font-size="13" text-anchor="middle" fill="#fff">O</text><rect x="13" y="20" width="17" height="10" fill="#111"/><text x="21.500" y="28" class="svgt-b" font-size="7" text-anchor="middle" fill="#8ef">NEW</text></svg><i class="dot"></i></div>
    <div class="app-i"><svg class="ai" viewBox="0 0 30 30"><rect x="7" y="1" width="23" height="28" rx="2" fill="#a35bd6"/><rect x="22" y="8" width="8" height="7" fill="#c58ae8"/><rect x="22" y="15" width="8" height="7" fill="#7d3bb0"/><rect x="1" y="7" width="16" height="17" rx="2" fill="#6a22a0"/><text x="9" y="20" class="svgt-b" font-size="13" text-anchor="middle" fill="#fff">N</text></svg><i class="dot"></i></div>
    <div class="app-i"><svg class="ai" viewBox="0 0 30 30"><circle cx="15" cy="17" r="13" fill="#ff7139"/><path d="M18 2q8 6 8 15H12q-1-8 6-15z" fill="#ffbd4f"/><circle cx="15" cy="17" r="8" fill="#7c3fc2"/><circle cx="13" cy="15" r="3" fill="#c08cf0"/></svg><i class="dot"></i></div>
    <div class="app-i"><svg class="ai" viewBox="0 0 30 30"><path d="M12 1h6l1 4 4-1 4 6-3 3v4l3 3-4 6-4-1-1 4h-6l-1-4-4 1-4-6 3-3v-4L3 10l4-6 4 1z" fill="#6d7a88"/><circle cx="15" cy="15" r="7" fill="#fff"/><circle cx="15" cy="15" r="5.500" fill="#0f62b0"/></svg><i class="dot"></i></div>
    <div class="app-i"><svg class="ai" viewBox="0 0 30 30"><rect width="30" height="30" fill="#9a0000"/><text x="15" y="24" class="svgt-b" font-size="23" text-anchor="middle" fill="#fff" font-style="italic">Fz</text></svg><i class="dot"></i></div>
    <div class="app-i"><svg class="ai" viewBox="0 0 30 30"><path d="M0 3q0-2 2-2h9l4 4h-15z" fill="#d99a12"/><rect y="5" width="30" height="25" rx="2" fill="#fbcf3f"/><rect x="8" y="19" width="14" height="8" rx="1" fill="#1f7fd6"/><rect x="11" y="22" width="8" height="1.500" fill="#fff"/></svg><i class="dot"></i></div>
    <div class="app-i"><svg class="ai" viewBox="0 0 30 30"><circle cx="15" cy="15" r="15" fill="#6e35a8"/><circle cx="15" cy="15" r="9.500" fill="#fff"/><path d="M11 26v-4q-3-2-3-7 0-2 1-3v-3l3 1q3-1 6 0l3-1v3q1 1 1 3 0 5-3 7v4z" fill="#6e35a8"/></svg><i class="dot"></i></div>
    <div class="app-i"><svg class="ai" viewBox="0 0 30 30"><path d="M21 1l8 4v20l-8 4L8 17l-5 4-3-2 5-4-5-4 3-2 5 4z" fill="#0a7ad1"/><path d="M21 8v14l-9-7z" fill="#1f2630"/><path d="M21 1l8 4v20l-8 4z" fill="#1f9cf0"/></svg><i class="dot"></i></div>
  </div>
  <div class="tray">
    <svg class="tr-sync" viewBox="0 0 24 24"><path d="M4 11a8 8 0 0 1 13-6M20 13a8 8 0 0 1-6 7" fill="none" stroke="#eee" stroke-width="1.400"/><path d="M15 1l3 4-4 1M4 17l4 1-1 4" fill="none" stroke="#eee" stroke-width="1.400"/><circle cx="14" cy="17" r="5" fill="#f7931e"/></svg>
    <span class="tr-lang">NOB</span>
    <svg class="tr-wifi" viewBox="0 0 20 16"><path d="M1 6q9-8 18 0M4 9q6-5 12 0M7 12q3-2.500 6 0" fill="none" stroke="#fff" stroke-width="1.500"/><circle cx="10" cy="14" r="1.500" fill="#fff"/></svg>
    <svg class="tr-vol" viewBox="0 0 20 16"><path d="M1 5h3l4-4v14l-4-4H1z" fill="none" stroke="#fff" stroke-width="1.200"/><path d="M11 5q2 3 0 6" fill="none" stroke="#fff"/><path d="M14 2q4 6 0 12" fill="none" stroke="#888"/></svg>
    <svg class="tr-bat" viewBox="0 0 20 18"><rect x="1.500" y="5.500" width="15" height="10" rx="2" fill="none" stroke="#fff" stroke-width="1.500"/><rect x="17" y="8" width="2" height="5" fill="#fff"/><path d="M7 1L4 9h4l-2 6 6-8H8z" fill="#fff"/></svg>
    <div class="tr-time"><span>14:10</span><span>10/11/2023</span></div>
    <svg class="tr-bell" viewBox="0 0 14 22"><path d="M7 1q5 0 5 7v6l2 3H0l2-3V8q0-7 5-7z" fill="#9fe3f7"/><ellipse cx="7" cy="19.500" rx="2.500" ry="1.500" fill="#9fe3f7"/></svg>
  </div>
</div>
</div>
</body>
</html>
```

FILE: styles.css
```css
* { box-sizing: border-box; }
html, body { margin: 0; padding: 0; overflow: hidden; }
body { font-family: "Open Sans", "Liberation Sans", sans-serif; }
.defs { display: block; width: 0; height: 0; }
.svgt { font-family: "Liberation Sans", sans-serif; }
.svgt-b { font-family: "Liberation Sans", sans-serif; font-weight: 700; }

.screen { width: 1920px; height: 1080px; background: #17181f; padding-top: 8px; overflow: hidden; display: flex; flex-direction: column; }
.window { width: 1914px; height: 1012px; margin-left: 1px; border-radius: 9px 9px 0 6px; overflow: hidden; display: flex; flex-direction: column; background: #fff; }

/* tab strip */
.tabstrip { height: 54px; background: #ffa940; display: flex; align-items: flex-start; flex: none; padding-left: 12px; }
.tabs { display: flex; padding-top: 11px; flex: none; }
.tab { width: 92.3px; height: 43px; display: flex; align-items: center; padding-left: 9px; color: #3b2b12; font-size: 14px; background: linear-gradient(#8a6a35, #8a6a35) right 50%/1px 25px no-repeat; }
.tab-active { background: #ffdeb5; border-radius: 10px 10px 0 0; color: #3b2b12; }
.fav { width: 20px; height: 20px; flex: none; }
.tab-t { margin-left: 9px; width: 46px; overflow: hidden; white-space: nowrap; -webkit-mask-image: linear-gradient(to right, #000 72%, transparent); mask-image: linear-gradient(to right, #000 72%, transparent); }
.tab-t-short { width: 16px; }
.tab-x { margin-left: 14px; font-size: 11px; font-weight: 700; color: #222; }
.newtab { margin: 16px 0 0 14px; font-size: 24px; line-height: 28px; color: #111; font-weight: 400; width: 24px; text-align: center; }
.wc { width: 14px; height: 14px; flex: none; margin-top: 21px; }
.wc-chev { margin-left: 88px; margin-top: 17px; }
.wc-min { margin-left: 43px; margin-top: 12px; }
.wc-max { margin-left: 44px; margin-top: 12px; }
.wc-close { margin-left: 42px; margin-top: 12px; }

/* toolbar */
.toolbar { height: 48px; background: #ffdeb5; display: flex; padding: 5px 0 0 7px; flex: none; }
.tb-group { display: flex; align-items: center; height: 43px; flex: none; }
.tbi { width: 40px; height: 20px; flex: none; }
.tbi-avatar { height: 28px; }
.tbi-ublock { height: 26px; }
.omni { width: 1485px; height: 43px; margin-left: 8px; border-radius: 22px; background: #dec3a0; display: flex; align-items: center; padding-left: 16px; flex: none; }
.lock { width: 12px; height: 14px; flex: none; }
.url { margin-left: 14px; font-size: 16.650px; color: #6b5c44; white-space: nowrap; }
.url-host { font-weight: 400; color: #2b2b2b; }
.omni-right { margin-left: auto; margin-right: 3px; }
.tb-ext { margin-left: 7px; }

/* bookmarks */
.bookmarks { height: 45px; background: #ffdeb5; border-bottom: 1px solid #c9ae8f; flex: none; padding-left: 18px; }
.bm-grid { display: grid; grid-template-columns: 183px 83px 151px 131px 190px 186px 188px 164px 187px 251px 21px auto; height: 43px; align-items: center; }
.bm { display: flex; align-items: center; gap: 9px; font-size: 14px; color: #2a2113; white-space: nowrap; }
.bm-more { font-size: 15px; color: #222; border-right: 1px solid #c9ae8f; height: 22px; line-height: 22px; }
.bm-all { display: flex; align-items: center; gap: 12px; margin-left: 14px; font-size: 14px; color: #2a2113; white-space: nowrap; }
.bm-folder { width: 16px; height: 22px; }

/* app */
.app { flex: 1; display: flex; min-height: 0; }
.side { width: 318px; flex: none; background: #d3d9e0; padding: 0 12px 8px 11px; display: flex; flex-direction: column; color: #4d4d4d; }
.w-head { height: 71px; border-bottom: 1px solid #aab0b6; display: flex; padding-top: 12px; flex: none; }
.w-brand { width: 207px; }
.w-logo { display: flex; align-items: center; height: 38px; }
.w-mark { width: 38px; height: 38px; flex: none; }
.w-name { margin-left: 7px; font-size: 34.500px; font-weight: 300; color: #4d4d4d; letter-spacing: -1px; line-height: 38px; }
.w-tag { font-size: 10px; color: #666; margin: 2px 0 0 1px; white-space: nowrap; line-height: 15px; }
.w-power { font-size: 12px; line-height: 15px; color: #555; padding-top: 12px; }
.w-link { color: #1a56c8; text-decoration: underline; }
.addr { display: flex; align-items: center; height: 20px; margin-top: 8px; flex: none; }
.addr-l { width: 56px; font-size: 12.5px; color: #333; padding-left: 2px; white-space: nowrap; }
.addr-box { width: 237px; height: 20px; background: #fff; border-radius: 3px; display: flex; align-items: center; justify-content: space-between; padding: 0 7px 0 4px; font-family: "Liberation Sans", sans-serif; font-size: 10.100px; color: #111; }
.addr-r { width: 12px; height: 12px; }
.styles { height: 36px; margin-top: 13px; background: #fff; border-radius: 4px; display: flex; align-items: center; padding-left: 67px; flex: none; font-size: 13px; color: #444; }
.st-l { width: 48px; }
.st-s { font-size: 10.5px; color: #444; }
.track { width: 30px; height: 12px; margin: 0 11px 0 4px; border-radius: 6px; background: #9fc3cc; display: flex; align-items: center; justify-content: flex-end; }
.knob { width: 17px; height: 17px; border-radius: 50%; background: #4a7bbb; box-shadow: 0 1px 2px rgba(0,0,0,.4); flex: none; margin-right: -4px; }
.d-title { font-size: 19px; line-height: 26px; margin-top: 8px; color: #444; flex: none; }
.stabs { display: grid; grid-template-columns: repeat(6, 1fr); height: 43px; margin-top: 7px; background: #dfe3e8; border-radius: 6px 6px 0 0; flex: none; }
.stab { display: flex; flex-direction: column; align-items: center; font-size: 10px; line-height: 14px; color: #444; padding-top: 5px; white-space: nowrap; }
.stab-on { background: #fff; border-radius: 5px 5px 0 0; border-bottom: 1px dotted #444; }
.stab-gray { color: #777; }
.stab-gray span { color: #444; }
.sti { width: 19px; height: 19px; margin-bottom: 3px; flex: none; }
.panel { flex: 1; min-height: 0; background: #fff; display: flex; overflow: hidden; }
.cards { width: 274px; padding: 7px 7px 0 6px; flex: none; overflow: hidden; }
.card { background: #f3f3f3; border-radius: 4px; padding: 8px 0 3px; margin-bottom: 5px; }
.card-a { padding-top: 6px; padding-bottom: 4px; }
.card-b { padding-top: 7px; padding-bottom: 2px; }
.card-c { padding-bottom: 1px; }
.card-d { padding-bottom: 1px; }
.c-h { display: flex; align-items: center; height: 25px; margin-bottom: 1px; font-size: 17.700px; color: #505050; padding-left: 6px; white-space: nowrap; letter-spacing: .2px; }
.card-a .c-h, .card-b .c-h { margin-bottom: 2px; }
.card-c .c-h, .card-d .c-h { margin-bottom: 3px; }
.card-e .c-h { margin-bottom: 4px; }
.cb { width: 11px; height: 11px; margin: 0; accent-color: #0a6cff; flex: none; }
.c-i { flex: none; margin-left: 7px; margin-right: 4px; }
.c-i-err { width: 15px; height: 15px; margin-top: -4px; }
.c-i-con { width: 22px; height: 12px; }
.c-i-tri { width: 16px; height: 15px; margin-top: -3px; margin-right: 5px; }
.c-i-tree { width: 17px; height: 17px; color: #3f6bb5; margin-top: -3px; margin-right: 4px; }
.c-s { display: flex; align-items: center; height: 19px; font-size: 12.5px; color: #505050; padding-left: 23px; white-space: nowrap; letter-spacing: .35px; }
.c-s .cb { margin-right: 2px; }
.c-s-plain { padding-left: 21px; }
.c-r { display: flex; height: 28px; padding: 2px 0 0 43px; gap: 6px; align-items: flex-start; }
.c-r-29 { height: 29px; }
.si { width: 22px; height: 22px; flex: none; }
.inf { width: 14px; height: 14px; flex: none; margin-top: 11px; margin-left: -3px; }
.inf-3 { margin-left: -2px; }
.c-r-dot { height: 29px; gap: 0; padding: 0 0 0 39px; }
.dotbox { width: 30px; height: 29px; border: 1px dotted #aaa; padding: 3px 0 0 5px; }
.dotbox .si { opacity: .55; display: block; }
.inf-dot { margin: 14px 0 0 2px; }
.p-scroll { width: 21px; background: #f1f1f1; display: flex; flex-direction: column; align-items: center; flex: none; }
.p-thumb { width: 17px; height: 442px; background: #bdbdbd; flex: none; margin: 7px 0 148px; }
.arrow-up { width: 0; height: 0; border: 5px solid transparent; border-top: 0; border-bottom: 5px solid #a3a3a3; margin-top: 9px; flex: none; }
.arrow-down { width: 0; height: 0; border: 5px solid transparent; border-bottom: 0; border-top: 5px solid #555; flex: none; }

/* main */
.main { flex: 1; min-width: 0; display: flex; flex-direction: column; }
.band { height: 60px; background: #f9f9f9; border-bottom: 1px solid #808a7c; flex: none; display: flex; flex-direction: column; align-items: center; color: #222; }
.band-t { font-size: 11.700px; line-height: 18px; }
.band-i { display: flex; align-items: flex-start; gap: 8px; height: 31px; margin-top: 6px; }
.bi { width: 33px; height: 33px; margin-right: -5px; }
.en { width: 28px; height: 17px; margin-top: 4px; background: #1e7a4a; color: #fff; font-size: 11.5px; line-height: 15px; text-align: center; border: 1px solid #ccc; font-family: "Liberation Sans", sans-serif; overflow: hidden; margin-right: -1px; }
.view { flex: 1; min-height: 0; display: flex; flex-direction: column; position: relative; background: #fff; }
.view-top { height: 784px; display: flex; flex: none; }
.doc { flex: 1; min-width: 0; padding: 0 0 0 7px; font-family: "Liberation Serif", serif; color: #000; overflow: hidden; }
.vscroll { width: 20px; background: #f1f1f1; display: flex; flex-direction: column; align-items: center; flex: none; }
.v-thumb { width: 16px; height: 659px; background: #bdbdbd; flex: none; margin: 8px 0 88px; }
.hscroll { height: 18px; margin-left: 7px; background: #f1f1f1; display: flex; align-items: center; flex: none; width: 1569px; }
.h-thumb { width: 1527px; height: 18px; background: #bdbdbd; flex: none; margin: 0 8px 0 8px; }
.arrow-left { width: 0; height: 0; border: 5px solid transparent; border-left: 0; border-right: 5px solid #777; flex: none; }
.arrow-right { width: 0; height: 0; border: 5px solid transparent; border-right: 0; border-left: 5px solid #555; flex: none; margin-left: 8px; }
.code { position: absolute; left: 748px; top: 767px; width: 76px; height: 38px; background: #1a9688; clip-path: polygon(50% 0, 100% 28%, 100% 100%, 0 100%, 0 28%); display: flex; flex-direction: column; align-items: center; color: #fff; font-family: "Open Sans", sans-serif; }
.code-g { font-size: 28px; line-height: 26px; }
.code-t { font-size: 12px; line-height: 12px; }

.site-head { height: 133px; padding-top: 15px; }
.shield { width: 31px; height: 31px; display: block; flex: none; margin-left: 7px; }
.foot .shield { margin-left: 0; }
.shield-cat { margin-left: 0; }
.di { width: 32px; height: 32px; flex: none; display: block; }
.nav-row { display: grid; grid-template-columns: 70px 110px 105px 153px 111px auto; margin: 12px 0 0 470px; height: 36px; }
.nav-c { display: flex; align-items: flex-start; }
.ng { font-size: 13px; margin-left: -2px; line-height: 24px; font-family: "DejaVu Sans", sans-serif; }
.ngi { width: 14px; height: 14px; margin: 6px 0 0 -1px; }
.ngi-cart { margin: 5px 0 0 0; }
.logo { margin: -7px 0 0; font-size: 28px; line-height: 28px; font-weight: 700; letter-spacing: 1.800px; white-space: nowrap; }
.search-row { display: flex; margin-left: 662px; align-items: flex-start; height: 40px; }
.s-in { width: 122px; height: 17px; background: #fff; border: 1px solid #c0c0c0; border-radius: 2px; font-size: 10px; line-height: 15px; color: #666; padding-left: 1px; }
.di-tag { margin: 5px 0 0 6px; }
.di-con { margin: 5px 0 0 4px; }
.s-btn { width: 41px; height: 17px; margin-left: 1px; background: #e8c8c8; border: 1px solid #b8a0a0; border-radius: 2px; font-size: 10px; line-height: 15px; text-align: center; color: #555; }
.rule { height: 2px; width: 1561px; background: #000; }
.row1 { display: flex; height: 322px; margin-top: 8px; }
.ph { background: #eee; color: #3b3e46; font-family: Lato, sans-serif; font-weight: 700; display: flex; align-items: center; justify-content: center; flex: none; white-space: nowrap; }
.ph-big { width: 776px; height: 322px; font-size: 103.500px; padding-bottom: 3px; }
.ph-small { width: 384px; height: 256px; font-size: 51.500px; margin-top: 9px; padding-bottom: 2px; }
.cat { width: 388px; flex: none; padding: 12px 0 0 20px; }
.cat-h { display: flex; align-items: flex-start; margin: 7px 0 0 108px; height: 28px; }
h2 { margin: -5px 0 0; font-size: 17.200px; line-height: 20px; font-weight: 700; color: #8a5a1f; white-space: nowrap; }
.cat-list { display: flex; flex-direction: column; gap: 13px; margin: 27px 0 0 12px; width: 337px; }
.cat-i { height: 26px; background: #f9e5e5; border: 1px solid #c8ad8e; padding-left: 4px; font-size: 13px; line-height: 24px; display: flex; align-items: center; white-space: pre; }
.cg { width: 9px; height: 14px; }
.cg-w { width: 15px; height: 13px; }
.pop { flex: 1; padding: 5px 0 0 13px; }
.sec-h { display: flex; align-items: flex-start; height: 27px; }
.sec-h-pop { padding-left: 147px; }
.sec-h-news { padding-left: 147px; }
.sec-h-sale { padding-left: 350px; }
h3 { margin: -5px 0 0; font-size: 15px; line-height: 18px; font-weight: 700; white-space: nowrap; }
.txt { margin: 5px 0 0; font-size: 13.330px; line-height: 15.330px; white-space: nowrap; }
.txt-pop { margin-top: 6px; }
.row2 { display: flex; height: 273px; }
.news { width: 392px; flex: none; padding: 22px 0 0 9px; }
.sale { flex: 1; padding: 10px 0 0 17px; }
.foot { height: 45px; width: 1569px; background: #ffdfdf; display: grid; grid-template-columns: 42px 53px 85px 75px 116px 172px auto; padding: 10px 0 0 413px; font-size: 13.330px; align-items: start; }
.foot span { margin-top: 12px; white-space: nowrap; line-height: 15px; }
.di-foot { width: 32px; height: 32px; margin-top: 5px; }

/* taskbar */
.taskbar { height: 60px; flex: none; background: linear-gradient(90deg, #1c1f27 0, #1c1f27 22%, #14244a 48%, #172340 68%, #1c2028 84%); border-top: 1px solid #4a4a4e; display: flex; align-items: center; color: #eee; font-size: 13.500px; }
.tb-weather { width: 447px; flex: none; display: flex; align-items: center; padding-left: 25px; gap: 9px; }
.w-ic { width: 30px; height: 30px; }
.w-t { display: flex; flex-direction: column; line-height: 19px; }
.w-sub { color: #ccc; }
.winlogo { width: 29px; height: 29px; flex: none; }
.tb-search { width: 275px; height: 40px; margin-left: 17px; border-radius: 20px; background: #39405a; border: 1px solid #4b5268; display: flex; align-items: center; padding-left: 14px; flex: none; }
.ts-ic { width: 20px; height: 22px; }
.ts-t { margin-left: 11px; font-size: 15.500px; color: #ddd; }
.ts-art { width: 56px; height: 34px; margin-left: auto; margin-right: 6px; }
.apps { display: grid; grid-template-columns: repeat(13, 55px); margin-left: 2px; flex: none; }
.app-i { height: 59px; display: flex; flex-direction: column; align-items: center; padding-top: 15px; position: relative; }
.ai { width: 30px; height: 30px; flex: none; }
.dot { width: 6px; height: 6px; border-radius: 50%; background: #9aa0a8; margin-top: 6px; flex: none; }
.app-on { background: #2a3450; border: 1px solid #39425e; border-radius: 6px; height: 50px; padding-top: 9px; width: 49px; margin-left: 3px; margin-top: 5px; }
.dot-on { width: 20px; height: 4px; border-radius: 2px; background: #4db4ee; margin-top: 2px; }
.badge9 { position: absolute; top: 9px; left: 30px; width: 17px; height: 17px; border-radius: 50%; background: #ec3f3f; color: #fff; font-size: 10px; line-height: 17px; text-align: center; }
.tray { display: flex; align-items: center; margin-left: 104px; flex: 1; }
.tr-sync { width: 24px; height: 24px; }
.tr-lang { margin-left: 21px; font-size: 14px; color: #eee; }
.tr-wifi { width: 20px; height: 16px; margin-left: 22px; }
.tr-vol { width: 20px; height: 16px; margin-left: 8px; }
.tr-bat { width: 20px; height: 18px; margin-left: 11px; }
.tr-time { width: 101px; display: flex; flex-direction: column; align-items: flex-end; line-height: 20px; font-size: 14px; color: #f0f0f0; }
.tr-bell { width: 14px; height: 22px; margin-left: 12px; }
```
